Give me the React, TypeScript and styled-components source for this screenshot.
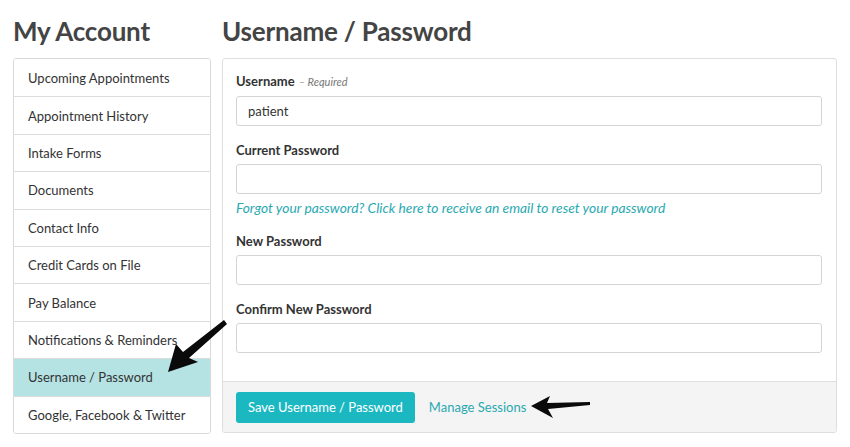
import styled, { createGlobalStyle } from 'styled-components';

const GlobalStyle = createGlobalStyle`
    html, body {
        margin: 0;
        padding: 0;
        background: #ffffff;
        font-family: Lato, "Open Sans", Arial, sans-serif;
        color: #333;
    }
    * { box-sizing: border-box; }
`;

const menuItems = [
    'Upcoming Appointments',
    'Appointment History',
    'Intake Forms',
    'Documents',
    'Contact Info',
    'Credit Cards on File',
    'Pay Balance',
    'Notifications & Reminders',
    'Username / Password',
    'Google, Facebook & Twitter',
];

// Layout
const Page = styled.div`
    position: relative;
    width: 850px;
    height: 447px;
    padding: 14px 0 0 13px;
    display: flex;
    gap: 11px;
`;

const Column = styled.div<{ $width: number }>`
    width: ${props => props.$width}px;
    display: flex;
    flex-direction: column;
`;

const PageTitle = styled.h1`
    margin: 0 0 10px 0;
    height: 34px;
    font-size: 26px;
    line-height: 34px;
    font-weight: 700;
    color: #444;
    letter-spacing: -0.2px;
`;

// Sidebar
const Menu = styled.ul`
    list-style: none;
    margin: 0;
    padding: 0;
    border: 1px solid #d9d9d9;
    border-radius: 3px;
    overflow: hidden;
`;

const MenuItem = styled.li<{ $active?: boolean }>`
    height: 37.4px;
    display: flex;
    align-items: center;
    padding: 0 14px;
    font-size: 13px;
    color: #333;
    background: ${props => props.$active ? '#b5e3e4' : '#fff'};
    border-top: 1px solid #dcdcdc;

    &:first-child {
        border-top: none;
    }
`;

// Main panel
const Panel = styled.div`
    border: 1px solid #dedede;
    border-radius: 3px;
    overflow: hidden;
    width: 615px;
`;

const PanelBody = styled.div`
    padding: 14px 14px 28px 13px;
    display: flex;
    flex-direction: column;
`;

const Label = styled.label<{ $gap: number }>`
    display: block;
    margin: ${props => props.$gap}px 0 6px 0;
    font-size: 13px;
    line-height: 16px;
    font-weight: 700;
    color: #333;
`;

const Hint = styled.span`
    font-size: 11px;
    font-weight: 400;
    font-style: italic;
    color: #777;
    margin-left: 4px;
`;

const Input = styled.input`
    height: 30px;
    width: 100%;
    border: 1px solid #d4d4d4;
    border-radius: 3px;
    padding: 0 11px;
    font-family: inherit;
    font-size: 13px;
    color: #333;
    outline: none;
`;

const HelpLink = styled.a`
    margin-top: 6px;
    font-size: 13.8px;
    line-height: 16px;
    font-style: italic;
    color: #2aa9b1;
    text-decoration: none;
`;

const Footer = styled.div`
    background: #f4f4f4;
    border-top: 1px solid #e0e0e0;
    height: 51px;
    padding: 0 13px;
    display: flex;
    align-items: center;
    gap: 14px;
`;

const PrimaryButton = styled.button`
    height: 31px;
    padding: 0 12px;
    border: none;
    border-radius: 3px;
    background: #1bb8c2;
    color: #fff;
    font-family: inherit;
    font-size: 13px;
`;

const FooterLink = styled.a`
    font-size: 13px;
    color: #2aa9b1;
    text-decoration: none;
`;

// Annotation arrows drawn over the page
const Arrow = styled.svg<{ $left: number; $top: number }>`
    position: absolute;
    left: ${props => props.$left}px;
    top: ${props => props.$top}px;
    overflow: visible;
`;

export default function App() {
    return (
        <>
            <GlobalStyle />
            <Page>
                <Column $width={198}>
                    <PageTitle>My Account</PageTitle>
                    <Menu>
                        {menuItems.map(item => (
                            <MenuItem key={item} $active={item === 'Username / Password'}>
                                {item}
                            </MenuItem>
                        ))}
                    </Menu>
                </Column>

                <Column $width={615}>
                    <PageTitle>Username / Password</PageTitle>
                    <Panel>
                        <PanelBody>
                            <Label $gap={0}>
                                Username<Hint>– Required</Hint>
                            </Label>
                            <Input defaultValue="patient" />

                            <Label $gap={16}>Current Password</Label>
                            <Input type="password" />
                            <HelpLink>Forgot your password? Click here to receive an email to reset your password</HelpLink>

                            <Label $gap={17}>New Password</Label>
                            <Input type="password" />

                            <Label $gap={16}>Confirm New Password</Label>
                            <Input type="password" />
                        </PanelBody>
                        <Footer>
                            <PrimaryButton>Save Username / Password</PrimaryButton>
                            <FooterLink>Manage Sessions</FooterLink>
                        </Footer>
                    </Panel>
                </Column>

                <Arrow $left={160} $top={315} width="72" height="62" viewBox="160 315 72 62">
                    <polygon
                        points="168,372 176,344 183,352 224,320 227,324 189,358 198,362"
                        fill="#0a0a0a"
                    />
                </Arrow>
                <Arrow $left={528} $top={392} width="64" height="30" viewBox="528 392 64 30">
                    <polygon
                        points="531,406 550,396 547,403 590,402 590,405 548,409 553,418"
                        fill="#0a0a0a"
                    />
                </Arrow>
            </Page>
        </>
    );
}
